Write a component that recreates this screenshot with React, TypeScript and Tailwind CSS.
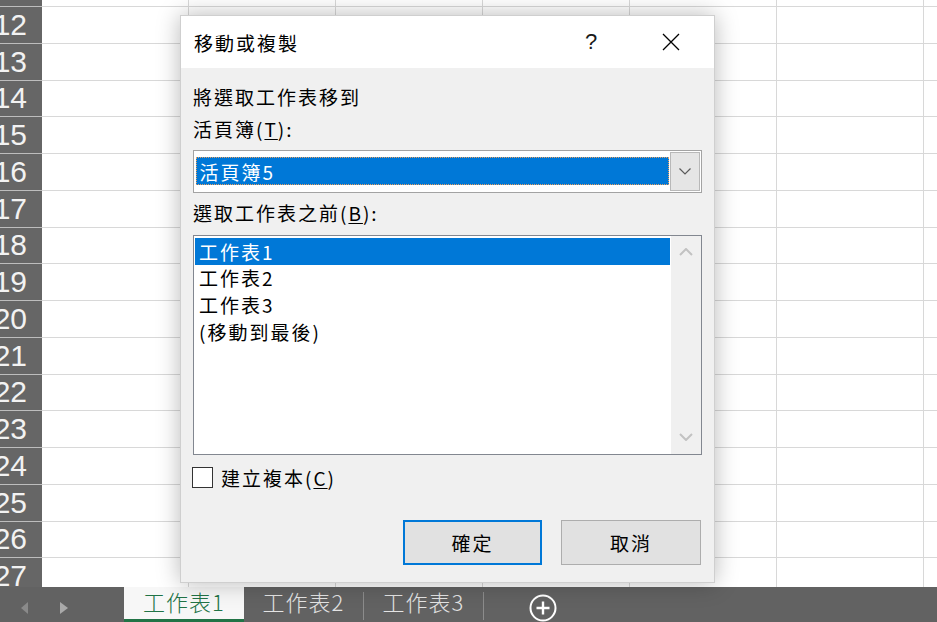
import React from "react";

const cjk = "font-['Noto_Sans_CJK_TC','Noto_Sans_CJK_SC',sans-serif]";

function TabBar() {
  return (
    <div className={`flex h-[35px] bg-[#626262] items-stretch ${cjk}`}>
      <div className="w-[124px] shrink-0 flex items-center pl-[21px] pt-[6px]">
        <svg width="7" height="12" viewBox="0 0 7 12">
          <path d="M7 0L0 6L7 12Z" fill="#8a8a8a" />
        </svg>
        <svg className="ml-[32px]" width="8" height="12" viewBox="0 0 8 12">
          <path d="M0 0L8 6L0 12Z" fill="#a9a9a9" />
        </svg>
      </div>
      <div className="w-[120px] shrink-0 bg-[#f7f7f7] border-b-[3px] border-[#217346] flex items-center justify-center text-[#217346] text-[22px] font-light tracking-[1px] leading-none pb-[5px]">
        工作表1
      </div>
      <div className="w-[119px] shrink-0 flex items-center justify-center text-[#e4e4e4] text-[22px] font-light tracking-[1px] leading-none pb-[8px]">
        工作表2
      </div>
      <div className="w-px bg-[#8c8c8c] mt-[5px] mb-[2px]" />
      <div className="w-[119px] shrink-0 flex items-center justify-center text-[#e4e4e4] text-[22px] font-light tracking-[1px] leading-none pb-[8px]">
        工作表3
      </div>
      <div className="w-px bg-[#8c8c8c] mt-[5px] mb-[2px]" />
      <div className="ml-[45px] pt-[7px]">
        <svg width="28" height="28" viewBox="0 0 28 28">
          <circle cx="14" cy="14" r="12.5" stroke="#fff" strokeWidth="2" fill="none" />
          <path d="M14 7.5V20.5M7.5 14H20.5" stroke="#fff" strokeWidth="2.4" />
        </svg>
      </div>
    </div>
  );
}

function Dialog() {
  const items = ["工作表1", "工作表2", "工作表3", "(移動到最後)"];
  return (
    <div
      className={`absolute left-[180px] top-[15px] w-[535px] h-[568px] bg-[#f0f0f0] border border-[#cfcfcf] shadow-[0_0_22px_rgba(0,0,0,0.28)] flex flex-col text-black text-[19px] tracking-[2px] ${cjk}`}
    >
      <div className="h-[52px] bg-white flex items-center pl-[13px] shrink-0">
        <span className="leading-none">移動或複製</span>
        <div className="ml-auto flex items-center">
          <span className="w-[30px] text-center text-[22px] text-[#1a1a1a] font-['Liberation_Sans',sans-serif] tracking-normal leading-none">
            ?
          </span>
          <div className="w-[80px] ml-[25px] mr-[3px] flex justify-center">
            <svg width="18" height="18" viewBox="0 0 18 18">
              <path d="M1 1L17 17M17 1L1 17" stroke="#000" strokeWidth="1.3" />
            </svg>
          </div>
        </div>
      </div>
      <div className="flex flex-col px-[12px]">
        <div className="mt-[13px] h-[32px] leading-[32px]">將選取工作表移到</div>
        <div className="h-[32px] leading-[32px]">
          活頁簿(<span className="underline underline-offset-2">T</span>):
        </div>
        <div className="mt-[5px] h-[43px] border border-[#a3a3a3] bg-white flex items-stretch">
          <div className="flex-1 px-[1.5px] pt-[6px] pb-[7px]">
            <div className="h-full bg-[#0078d7] border border-dotted border-[#e8a060] flex items-center pl-[3px] text-white leading-none">
              活頁簿5
            </div>
          </div>
          <div className="w-[30px] my-px mr-px bg-[#e5e5e5] border-[1.5px] border-[#b8b8b8] flex items-center justify-center">
            <svg width="12" height="7" viewBox="0 0 12 7">
              <path d="M0.5 0.5L6 6L11.5 0.5" stroke="#5a5a5a" strokeWidth="1.2" fill="none" />
            </svg>
          </div>
        </div>
        <div className="mt-[4px] h-[32px] leading-[32px]">
          選取工作表之前(<span className="underline underline-offset-2">B</span>):
        </div>
        <div className="mt-[6px] h-[220px] border border-[#828790] bg-white flex">
          <div className="flex-1 pt-[2px] px-px">
            {items.map((it, i) => (
              <div
                key={it}
                className={`h-[26.67px] flex items-center pl-[4px] leading-none ${
                  i === 0 ? "bg-[#0078d7] text-white" : ""
                }`}
              >
                {it}
              </div>
            ))}
          </div>
          <div className="w-[30px] bg-[#f0f0f0] flex flex-col items-center justify-between pt-[12px] pb-[13px]">
            <svg width="14" height="8" viewBox="0 0 14 8">
              <path d="M1 7L7 1L13 7" stroke="#c2c2c2" strokeWidth="2" fill="none" />
            </svg>
            <svg width="14" height="8" viewBox="0 0 14 8">
              <path d="M1 1L7 7L13 1" stroke="#c2c2c2" strokeWidth="2" fill="none" />
            </svg>
          </div>
        </div>
        <div className="mt-[12px] flex items-center -ml-px">
          <div className="w-[21px] h-[21px] border-[1.5px] border-[#333] bg-white" />
          <span className="ml-[8px] leading-none">
            建立複本(<span className="underline underline-offset-2">C</span>)
          </span>
        </div>
        <div className="mt-[32px] flex justify-end gap-[19px] pr-px">
          <div className="w-[139px] h-[45px] bg-[#e1e1e1] border-2 border-[#0078d7] flex items-center justify-center leading-none">
            確定
          </div>
          <div className="w-[140px] h-[45px] bg-[#e1e1e1] border border-[#adadad] flex items-center justify-center leading-none">
            取消
          </div>
        </div>
      </div>
    </div>
  );
}

export default function App() {
  const rows = Array.from({ length: 17 }, (_, i) => 11 + i);
  const cols = Array.from({ length: 7 }, (_, i) => i);
  return (
    <div className="relative w-[937px] h-[622px] overflow-hidden bg-white">
      <div className="h-[587px] overflow-hidden">
        <div className="-mt-[29.75px]">
          {rows.map((r) => (
            <div key={r} className="flex h-[36.75px]">
              <div className="w-[42px] shrink-0 bg-[#666666] border-b border-[#bdbdbd] flex items-center justify-end pr-[15px] overflow-hidden text-[30px] text-[#f2f2f2] font-['Liberation_Sans',sans-serif] leading-none whitespace-nowrap">
                {r}
              </div>
              {cols.map((c) => (
                <div key={c} className="w-[147px] shrink-0 border-r border-b border-[#d8d8d8]" />
              ))}
            </div>
          ))}
        </div>
      </div>
      <TabBar />
      <Dialog />
    </div>
  );
}
